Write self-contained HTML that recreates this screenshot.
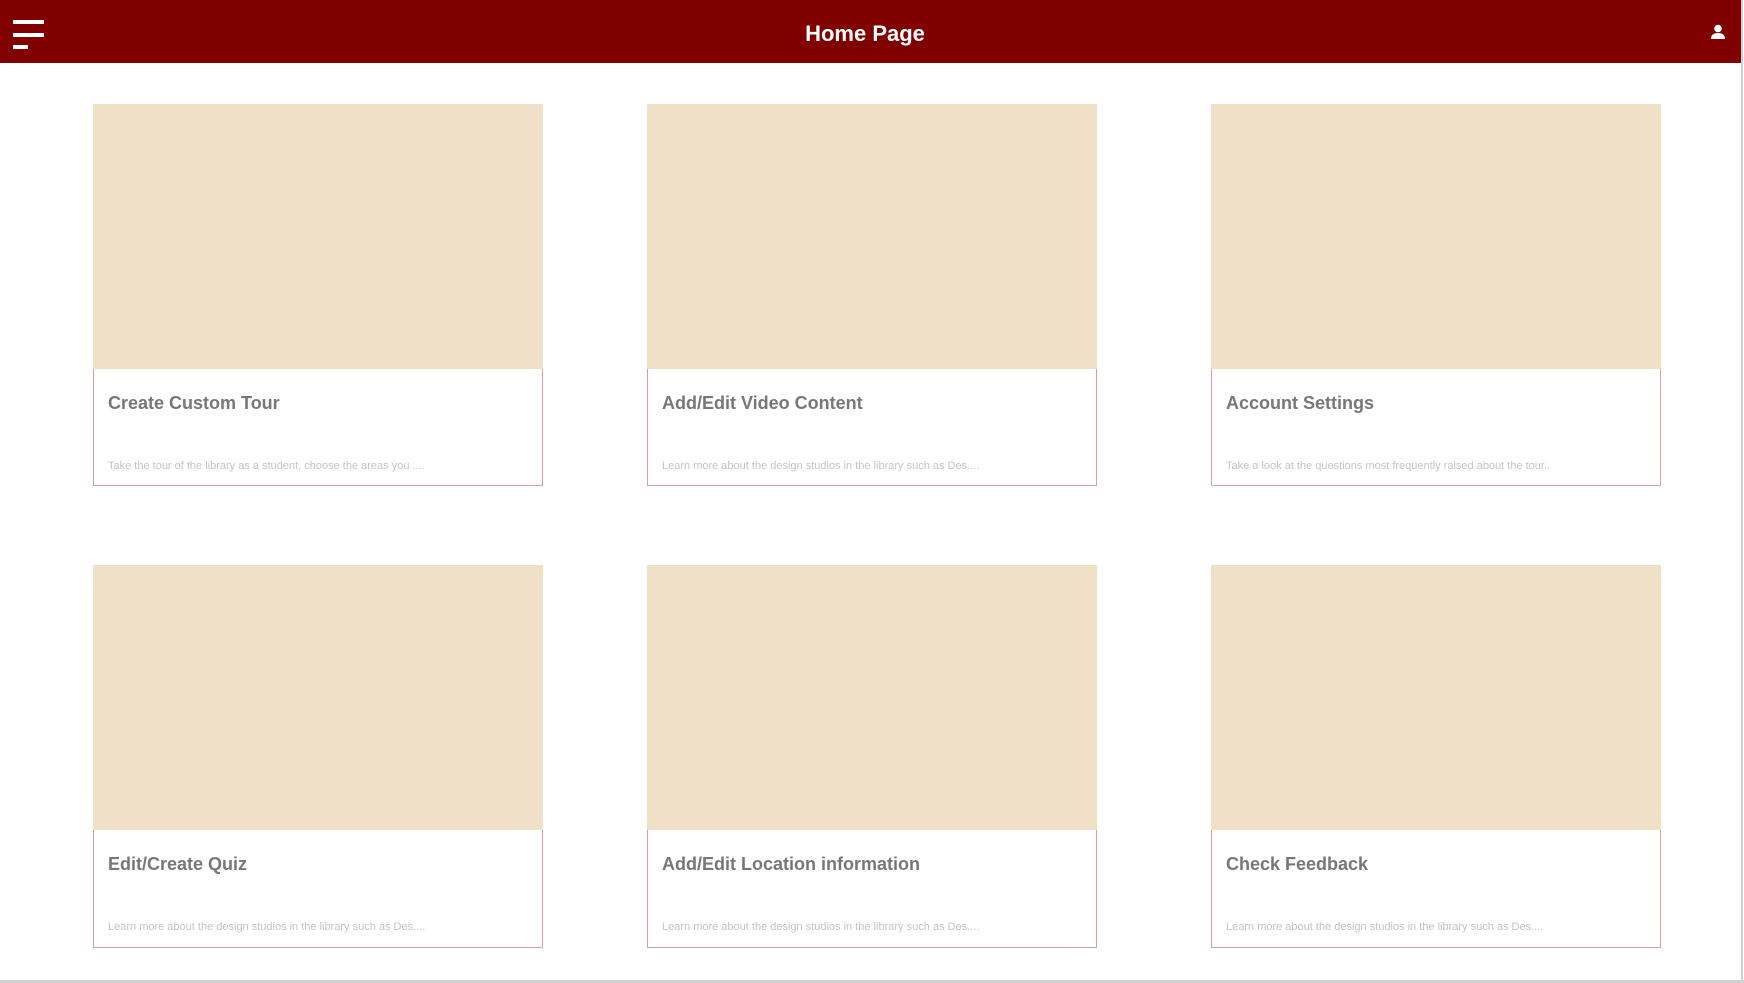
<!DOCTYPE html>
<html><head><style>
*{margin:0;padding:0;box-sizing:border-box}
body{width:1744px;height:983px;background:#fff;position:relative;overflow:hidden;font-family:"Liberation Sans",sans-serif}
.hdr{position:absolute;left:0;top:0;width:1742px;height:63px;background:#800000}
.hdr h1{position:absolute;left:0;width:1730px;top:21px;text-align:center;color:#fff;font-size:22px;font-weight:bold;font-family:"Liberation Sans",sans-serif}
.bar{position:absolute;left:13px;height:4px;background:#fff}
.card{position:absolute;width:450px;border:1px solid #d8a0a0;background:#fff}
.img{height:265px;background:#f0e0c8;margin:-1px -1px 0 -1px}
.card h2{position:absolute;left:14px;top:288px;font-size:18px;color:#777;font-weight:bold}
.card p{position:absolute;left:14px;top:355px;font-size:11px;color:#c4c4c4}
.vl{position:absolute;left:1741px;top:0;width:2px;height:983px;background:#d0d0d0}
.hl{position:absolute;left:0;top:980px;width:1744px;height:3px;background:#d0d0d0}
</style></head><body>
<div class="hdr">
<div class="bar" style="top:20px;width:31px"></div>
<div class="bar" style="top:33px;width:31px"></div>
<div class="bar" style="top:45px;width:15px"></div>
<h1>Home Page</h1>
<svg style="position:absolute;left:1710px;top:24px" width="16" height="16" viewBox="0 0 16 16"><circle cx="8" cy="4.5" r="3.8" fill="#fff"/><path d="M1 15 Q1 9 8 9 Q15 9 15 15 Z" fill="#fff"/></svg>
</div>
<div class="card" style="left:93px;top:104px;height:382px"><div class="img"></div><h2>Create Custom Tour</h2><p>Take the tour of the library as a student, choose the areas you ....</p></div>
<div class="card" style="left:647px;top:104px;height:382px"><div class="img"></div><h2>Add/Edit Video Content</h2><p>Learn more about the design studios in the library such as Des....</p></div>
<div class="card" style="left:1211px;top:104px;height:382px"><div class="img"></div><h2>Account Settings</h2><p>Take a look at the questions most frequently raised about the tour..</p></div>
<div class="card" style="left:93px;top:565px;height:383px"><div class="img"></div><h2>Edit/Create Quiz</h2><p>Learn more about the design studios in the library such as Des....</p></div>
<div class="card" style="left:647px;top:565px;height:383px"><div class="img"></div><h2>Add/Edit Location information</h2><p>Learn more about the design studios in the library such as Des....</p></div>
<div class="card" style="left:1211px;top:565px;height:383px"><div class="img"></div><h2>Check Feedback</h2><p>Learn more about the design studios in the library such as Des....</p></div>
<div class="vl"></div><div class="hl"></div>
</body></html>
